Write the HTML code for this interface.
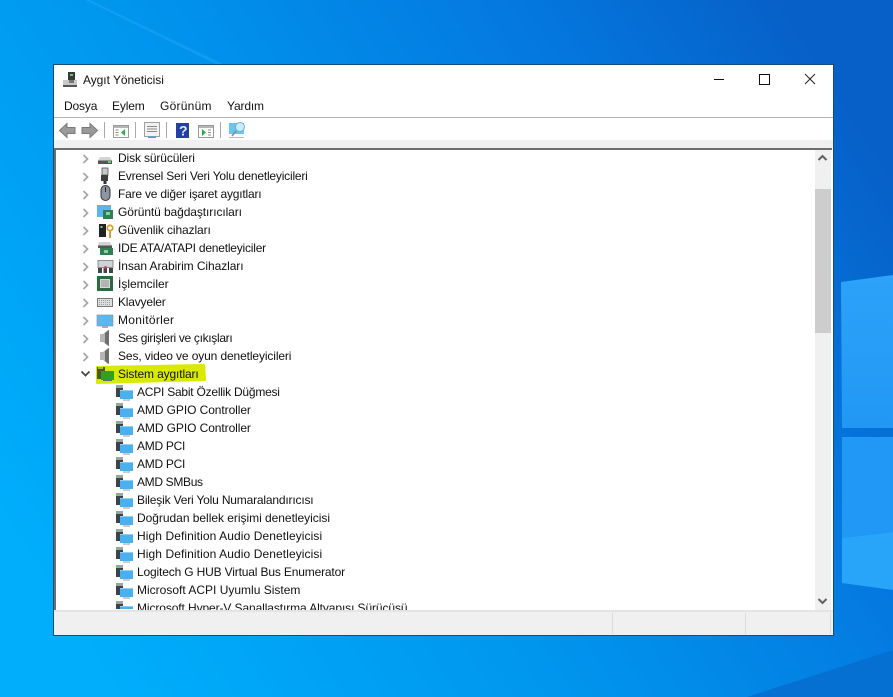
<!DOCTYPE html>
<html><head><meta charset="utf-8"><style>
html,body{margin:0;padding:0}
body{width:893px;height:697px;overflow:hidden;position:relative;font-family:"Liberation Sans",sans-serif;font-size:12px;color:#000;background:#0a80e4}
.a{position:absolute}
.t{position:absolute;white-space:nowrap;line-height:18px;height:18px;color:#111}
svg{position:absolute;overflow:hidden}
</style></head><body>
<svg style="left:0;top:0" width="893" height="697" viewBox="0 0 893 697">
<defs>
<linearGradient id="bg" x1="0" y1="0.75" x2="1" y2="0.25"><stop offset="0" stop-color="#00aefc"/><stop offset="0.4" stop-color="#0096ee"/><stop offset="0.75" stop-color="#0479e0"/><stop offset="1" stop-color="#0660c8"/></linearGradient>
<linearGradient id="p1" x1="0" y1="0" x2="0" y2="1"><stop offset="0" stop-color="#2ca2f9"/><stop offset="1" stop-color="#2198f4"/></linearGradient>
</defs>
<rect width="893" height="697" fill="url(#bg)"/>
<polygon points="747,697 893,650 893,697" fill="#0670d2"/>
<polygon points="85,0 90,0 225,65 218,65" fill="#22a8fa" opacity=".45"/>
<polygon points="841,282 893,275 893,428 842,428" fill="url(#p1)"/>
<polygon points="842,437 893,437 893,532 842,538" fill="#2198f5"/>
<polygon points="842,538 893,532 893,590 842,583" fill="#28a5f8"/>
</svg>

<div class="a" style="left:53px;top:64px;width:779px;height:570px;border:1px solid #164c78;background:#fff"></div>
<div class="a" style="left:54px;top:117px;width:779px;height:1px;background:#b5b5b5"></div>
<div class="a" style="left:54px;top:140px;width:779px;height:8px;background:#f0f0f0"></div>
<div class="a" style="left:54px;top:148px;width:778px;height:2px;background:#6e6e6e"></div>
<div class="a" style="left:54px;top:148px;width:2px;height:462px;background:#6e6e6e"></div>
<div class="a" style="left:54px;top:610px;width:779px;height:2px;background:#e4e4e4"></div>
<div class="a" style="left:54px;top:612px;width:779px;height:23px;background:#f0f0f0"></div>
<div class="a" style="left:612px;top:613px;width:1px;height:21px;background:#dcdcdc"></div>
<div class="a" style="left:745px;top:613px;width:1px;height:21px;background:#dcdcdc"></div>
<div class="a" style="left:830px;top:613px;width:1px;height:21px;background:#dcdcdc"></div>

<!-- scrollbar -->
<div class="a" style="left:815px;top:150px;width:16px;height:460px;background:#f0f0f0"></div>
<div class="a" style="left:815px;top:189px;width:16px;height:144px;background:#cdcdcd"></div>
<svg style="left:817px;top:153px" width="11" height="9" viewBox="0 0 11 9"><path d="M1.500 7 5.500 3 9.500 7" fill="none" stroke="#606060" stroke-width="2"/></svg>
<svg style="left:817px;top:597px" width="11" height="9" viewBox="0 0 11 9"><path d="M1.500 2 5.500 6 9.500 2" fill="none" stroke="#606060" stroke-width="2"/></svg>

<!-- title -->
<svg style="left:62px;top:71px" width="16" height="17" viewBox="0 0 16 17"><rect x="6" y="1" width="7" height="8" fill="#3a3a3a"/><rect x="8" y="3" width="3" height="2" fill="#5fd06a"/><rect x="1" y="9" width="14" height="7" fill="#c8c8c8"/><rect x="1" y="14" width="14" height="2" fill="#555"/><rect x="7" y="9" width="5" height="3" fill="#777"/></svg>
<div class="t" style="left:83px;top:71px;letter-spacing:-.05px">Aygıt Yöneticisi</div>
<svg style="left:710px;top:70px" width="120" height="20" viewBox="0 0 120 20"><path d="M4 9.500H14" stroke="#111" fill="none"/><rect x="49.500" y="4.500" width="10" height="10" fill="none" stroke="#111"/><path d="M95 4 105 14M105 4 95 14" stroke="#222" fill="none"/></svg>

<!-- menu -->
<div class="t" style="left:64px;top:97px;letter-spacing:-.15px">Dosya</div>
<div class="t" style="left:112px;top:97px;letter-spacing:-.15px">Eylem</div>
<div class="t" style="left:160px;top:97px;letter-spacing:.25px">Görünüm</div>
<div class="t" style="left:227px;top:97px;letter-spacing:-.15px">Yardım</div>

<!-- toolbar -->
<svg style="left:54px;top:118px" width="210" height="22" viewBox="0 0 210 22">
<path d="M5.500 12.500 13 5.500V9.500H21V15.500H13V19.500Z" fill="#9a9a9a" stroke="#7a7a7a"/>
<path d="M43.500 12.500 36 5.500V9.500H28V15.500H36V19.500Z" fill="#9a9a9a" stroke="#7a7a7a"/>
<rect x="50" y="4" width="1" height="16" fill="#aaa"/><rect x="81" y="4" width="1" height="16" fill="#aaa"/><rect x="112" y="4" width="1" height="16" fill="#aaa"/><rect x="166" y="4" width="1" height="16" fill="#aaa"/>
<rect x="59.500" y="7.500" width="15" height="12" fill="#fff" stroke="#9a9a9a"/><rect x="60" y="8" width="14" height="2" fill="#b5b5b5"/><path d="M71 11V18L67 14.500Z" fill="#28b04a"/><path d="M61.500 12h3M61.500 14.500h3M61.500 17h3" stroke="#888"/>
<rect x="90.500" y="4.500" width="15" height="14" fill="#f2f2f2" stroke="#a0a0a0"/><path d="M93 8.500h10M93 11h10M93 13.500h10" stroke="#8a8a8a"/><rect x="94" y="18.500" width="8" height="1.500" fill="#29a8e8"/>
<rect x="122" y="5" width="13" height="15" fill="#2440a8"/><text x="125" y="17.500" font-family="Liberation Sans" font-size="14" font-weight="bold" fill="#e8ecff">?</text>
<rect x="144.500" y="7.500" width="15" height="12" fill="#fff" stroke="#9a9a9a"/><rect x="145" y="8" width="14" height="2" fill="#b5b5b5"/><path d="M148 11V18L152 14.500Z" fill="#28b04a"/><path d="M154 12h3M154 14.500h3M154 17h3" stroke="#888"/>
<rect x="175" y="5" width="15" height="11" fill="#6cc4f4"/><circle cx="186" cy="9" r="4.500" fill="#c8ecfa" stroke="#7ab0c8"/><path d="M182 13 178 18" stroke="#8a8a8a" stroke-width="1.500"/><path d="M175 19.500H190" stroke="#bbb"/>
</svg>

<!-- yellow highlight -->
<svg style="left:94px;top:362px" width="114" height="24" viewBox="0 0 114 24"><path d="M3 5 110 3 111 18 3 21Z" fill="#d8ea00" stroke="#d8ea00" stroke-width="2" stroke-linejoin="round"/></svg>

<!-- arrows -->
<svg style="left:80px;top:151px" width="12" height="232" viewBox="0 0 12 232" fill="none" stroke="#a6a6a6" stroke-width="1.700">
<path d="M3.500 4 7.500 8 3.500 12M3.500 22 7.500 26 3.500 30M3.500 40 7.500 44 3.500 48M3.500 58 7.500 62 3.500 66M3.500 76 7.500 80 3.500 84M3.500 94 7.500 98 3.500 102M3.500 112 7.500 116 3.500 120M3.500 130 7.500 134 3.500 138M3.500 148 7.500 152 3.500 156M3.500 166 7.500 170 3.500 174M3.500 184 7.500 188 3.500 192M3.500 202 7.500 206 3.500 210"/>
<path d="M1.500 220.500 5.500 224.500 9.500 220.500" stroke="#444"/>
</svg>

<!-- category icons -->
<svg style="left:96px;top:150px" width="20" height="236" viewBox="0 0 20 236">
<path d="M4 7H14L16 10.500V14H2V10.500Z" fill="#d4d4d4"/><rect x="2" y="10.500" width="14" height="3.500" fill="#555"/><rect x="12" y="11" width="3" height="2" fill="#5fd06a"/>
<rect x="6" y="18" width="6" height="7" fill="#c8c8c8" stroke="#555" stroke-width=".8"/><rect x="5" y="25" width="7" height="6" fill="#3e3e3e"/><rect x="7.500" y="31" width="3" height="3" fill="#333"/>
<rect x="5" y="35.500" width="9" height="15" rx="4.500" fill="#8d95a0" stroke="#333"/><rect x="9" y="37" width="1" height="5" fill="#222"/>
<rect x="1" y="55" width="14" height="12" fill="#5cb4ec"/><rect x="7" y="60" width="10" height="9" fill="#2f7f52"/><rect x="10" y="62" width="4" height="3" fill="#8ad09a"/>
<rect x="3" y="74" width="7" height="13" fill="#222"/><rect x="4.500" y="76" width="2" height="2" fill="#6ad06a"/><circle cx="14" cy="78" r="2.700" fill="none" stroke="#d4a030" stroke-width="1.800"/><rect x="13" y="80" width="2" height="8" fill="#d4a030"/>
<path d="M3 92H14L16 95.500V98H2V95.500Z" fill="#d4d4d4"/><rect x="2" y="95.500" width="14" height="2.500" fill="#555"/><rect x="4" y="98" width="13" height="7" fill="#2f7f52"/><rect x="8" y="100" width="4" height="3" fill="#8ad09a"/>
<rect x="2" y="110.500" width="15" height="7" fill="#cfd3d8" stroke="#777" stroke-width=".8"/><path d="M2 118H6V123H2ZM7.500 118H11V123H7.500ZM13 118H17V123H13Z" fill="#444"/><rect x="8.500" y="116" width="2" height="3" fill="#c04040"/>
<rect x="1" y="126" width="16" height="15" fill="#2c6a42"/><rect x="4" y="129" width="10" height="9" fill="#d8d8d8"/><rect x="5" y="130" width="8" height="7" fill="#b4b4b4"/>
<rect x="1.500" y="148.500" width="15" height="8" fill="#dfdfdf" stroke="#777"/><path d="M3 150.500h12M3 152.500h12M3 154.500h12" stroke="#9a9a9a" stroke-dasharray="1 1"/>
<rect x="1" y="165" width="16" height="11" fill="#58b8f0" stroke="#8a98a4" stroke-width=".7"/><rect x="6" y="176" width="6" height="2" fill="#aaa"/>
<path d="M4 184H7L12 180H13V196H12L7 192H4Z" fill="#b5b5b5"/><path d="M9 183 13 180V196L9 193Z" fill="#6e6e6e"/>
<path d="M4 202H7L12 198H13V214H12L7 210H4Z" fill="#b5b5b5"/><path d="M9 201 13 198V214L9 211Z" fill="#6e6e6e"/>
<rect x="1" y="217" width="8" height="12" fill="#4a5a20"/><rect x="2" y="217" width="5" height="2" fill="#a0c040"/><rect x="5" y="221" width="13" height="9" fill="#2fa020"/><rect x="7" y="230" width="9" height="1" fill="#666"/>
</svg>

<!-- child icons -->
<svg style="left:115px;top:384px" width="19" height="225" viewBox="0 0 19 225">
<defs><g id="d"><rect x="1" y="1" width="7" height="12" fill="#3d4348"/><rect x="1" y="1" width="7" height="3" fill="#a0a4a8"/><rect x="2" y="1.500" width="2" height="1.500" fill="#60c860"/><rect x="5" y="6" width="13" height="9" fill="#4ab0f0"/><rect x="5" y="6" width="13" height="1" fill="#8fd0f4"/><rect x="8" y="15.500" width="7" height="1" fill="#999"/></g></defs>
<use href="#d" y="0"/><use href="#d" y="18"/><use href="#d" y="36"/><use href="#d" y="54"/><use href="#d" y="72"/><use href="#d" y="90"/><use href="#d" y="108"/><use href="#d" y="126"/><use href="#d" y="144"/><use href="#d" y="162"/><use href="#d" y="180"/><use href="#d" y="198"/><use href="#d" y="216"/>
</svg>

<!-- tree text -->
<div class="a" style="left:56px;top:150px;width:759px;height:460px;overflow:hidden">
<div class="t" style="left:62px;top:-1px;letter-spacing:-.13px">Disk sürücüleri</div>
<div class="t" style="left:62px;top:17px;letter-spacing:-.2px">Evrensel Seri Veri Yolu denetleyicileri</div>
<div class="t" style="left:62px;top:35px;letter-spacing:-.2px">Fare ve diğer işaret aygıtları</div>
<div class="t" style="left:62px;top:53px;letter-spacing:-.09px">Görüntü bağdaştırıcıları</div>
<div class="t" style="left:62px;top:71px;letter-spacing:-.11px">Güvenlik cihazları</div>
<div class="t" style="left:62px;top:89px;letter-spacing:-.21px">IDE ATA/ATAPI denetleyiciler</div>
<div class="t" style="left:62px;top:107px;letter-spacing:-.08px">İnsan Arabirim Cihazları</div>
<div class="t" style="left:62px;top:125px">İşlemciler</div>
<div class="t" style="left:62px;top:143px;letter-spacing:-.2px">Klavyeler</div>
<div class="t" style="left:62px;top:161px;letter-spacing:.3px">Monitörler</div>
<div class="t" style="left:62px;top:179px;letter-spacing:-.32px">Ses girişleri ve çıkışları</div>
<div class="t" style="left:62px;top:197px;letter-spacing:-.12px">Ses, video ve oyun denetleyicileri</div>
<div class="t" style="left:62px;top:215px;letter-spacing:-.13px">Sistem aygıtları</div>
<div class="t" style="left:81px;top:233px;letter-spacing:-.23px">ACPI Sabit Özellik Düğmesi</div>
<div class="t" style="left:81px;top:251px;letter-spacing:-.08px">AMD GPIO Controller</div>
<div class="t" style="left:81px;top:269px;letter-spacing:-.08px">AMD GPIO Controller</div>
<div class="t" style="left:81px;top:287px;letter-spacing:-.28px">AMD PCI</div>
<div class="t" style="left:81px;top:305px;letter-spacing:-.28px">AMD PCI</div>
<div class="t" style="left:81px;top:323px;letter-spacing:-.33px">AMD SMBus</div>
<div class="t" style="left:81px;top:341px;letter-spacing:-.18px">Bileşik Veri Yolu Numaralandırıcısı</div>
<div class="t" style="left:81px;top:359px;letter-spacing:-.03px">Doğrudan bellek erişimi denetleyicisi</div>
<div class="t" style="left:81px;top:377px;letter-spacing:.09px">High Definition Audio Denetleyicisi</div>
<div class="t" style="left:81px;top:395px;letter-spacing:.09px">High Definition Audio Denetleyicisi</div>
<div class="t" style="left:81px;top:413px;letter-spacing:-.16px">Logitech G HUB Virtual Bus Enumerator</div>
<div class="t" style="left:81px;top:431px">Microsoft ACPI Uyumlu Sistem</div>
<div class="t" style="left:81px;top:449px;letter-spacing:-.1px">Microsoft Hyper-V Sanallaştırma Altyapısı Sürücüsü</div>
</div>
</body></html>
